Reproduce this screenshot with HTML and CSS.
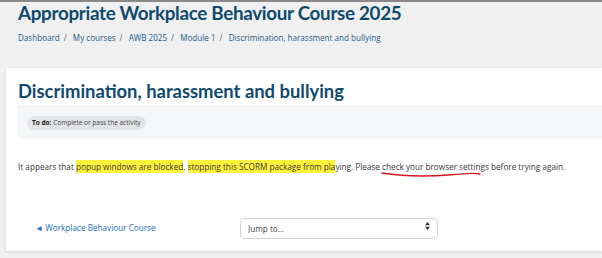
FILE: index.html
```html
<!DOCTYPE html>
<html lang="en">
  <head>
    <meta charset="UTF-8">
    <meta name="viewport" content="width=device-width, initial-scale=1.0">
    <title>Discrimination, harassment and bullying</title>
    <link rel="stylesheet" href="styles.css">
  </head>
  <body>
    <header class="page-header">
      <h1>Appropriate Workplace Behaviour Course 2025</h1>
      <nav class="breadcrumb">
        <a href="#">Dashboard</a><span class="sep">/</span>
        <a href="#">My courses</a><span class="sep">/</span>
        <a href="#">AWB 2025</a><span class="sep">/</span>
        <a href="#">Module 1</a><span class="sep">/</span>
        <a href="#">Discrimination, harassment and bullying</a>
      </nav>
    </header>

    <main class="card">
      <h2>Discrimination, harassment and bullying</h2>

      <div class="activity-info">
        <span class="badge"><strong>To do:</strong> Complete or pass the activity</span>
      </div>

      <p class="notice">
        It appears that <mark>popup windows are blocked</mark>, <mark>stopping this SCORM package from pla</mark>ying.
        Please <span class="scribble">check your browser settings<svg viewBox="0 0 104 8" width="100" height="8"><path d="M1 3 C 20 6, 45 7, 70 5 S 96 3, 103 4" fill="none" stroke="#d9141b" stroke-width="1.4" stroke-linecap="round"/></svg></span> before trying again.
      </p>

      <div class="activity-nav">
        <a href="#" class="prev-link">&#9668; Workplace Behaviour Course</a>
        <div class="jump">
          <select>
            <option>Jump to...</option>
          </select>
          <svg class="jump-arrows" viewBox="0 0 6 10" width="5" height="8"><path d="M3 0 L6 4 H0 Z M3 10 L0 6 H6 Z" fill="#333"/></svg>
        </div>
      </div>
    </main>
  </body>
</html>
```

FILE: styles.css
```css
body {
  font-family: "Open Sans", Arial, sans-serif;
  background-color: #f0f0f0;
  color: #333;
  margin: 0;
  padding: 0;
  border-top: 2px solid #8a8a8a;
  height: 256px;
  overflow: hidden;
}

.page-header {
  padding: 0 18px;
}

h1 {
  margin: 0;
  font-family: Lato, "Open Sans", sans-serif;
  font-size: 18.8px;
  font-weight: 700;
  line-height: 22px;
  letter-spacing: -0.3px;
  color: #0f4a6e;
}

.breadcrumb {
  margin-top: 8px;
  font-size: 8.1px;
  line-height: 12px;
  color: #1d5b87;
}

.breadcrumb a {
  color: #1d5b87;
  text-decoration: none;
}

.breadcrumb .sep {
  color: #6a6a6a;
  margin: 0 4px;
}

.card {
  margin: 24px 0 0 6px;
  background-color: #fff;
  box-shadow: 0 1px 3px rgba(0, 0, 0, 0.12);
  padding: 11px 0 13px 12px;
  height: 159px;
}

h2 {
  margin: 0;
  font-family: Lato, "Open Sans", sans-serif;
  font-size: 18.4px;
  font-weight: 700;
  line-height: 24px;
  color: #0f4a6e;
}

.activity-info {
  margin-top: 2px;
  margin-left: -1px;
  background-color: #f5f6f8;
  border-radius: 4px 0 0 4px;
  padding: 11px 10px 10px;
  height: 13px;
}

.badge {
  display: inline-block;
  background-color: #e3e4e8;
  border-radius: 8px;
  padding: 0 5px;
  font-size: 6.5px;
  line-height: 14px;
  color: #444;
  vertical-align: top;
}

.badge strong {
  color: #1a1a1a;
}

.notice {
  margin: 22px 0 0;
  font-size: 8.2px;
  line-height: 12px;
  color: #3a3a3a;
}

mark {
  background-color: #fff23a;
  color: #3a3a3a;
  padding: 1px 0;
}

.scribble {
  position: relative;
}

.scribble svg {
  position: absolute;
  left: -1px;
  top: 9px;
}

.activity-nav {
  margin-top: 42px;
  display: flex;
  align-items: center;
  padding-left: 17px;
}

.prev-link {
  font-size: 8.2px;
  color: #1a6fc0;
  text-decoration: none;
  width: 205px;
}

.jump {
  position: relative;
}

.jump select {
  appearance: none;
  width: 198px;
  height: 21px;
  border: 1px solid #cfd3d8;
  border-radius: 4px;
  background-color: #fff;
  font-family: "Open Sans", Arial, sans-serif;
  font-size: 8.2px;
  color: #444;
  padding: 0 7px;
}

.jump-arrows {
  position: absolute;
  right: 8px;
  top: 7px;
}
```
